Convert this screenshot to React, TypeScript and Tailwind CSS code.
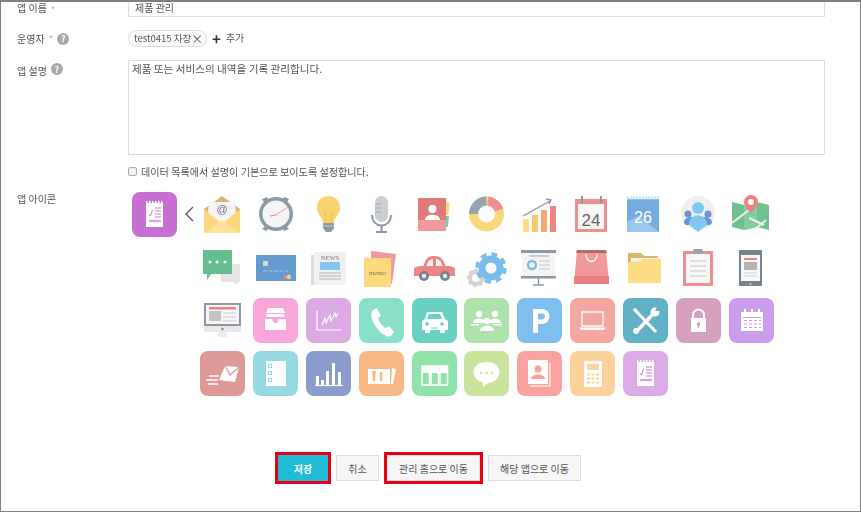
import React from 'react';

const Svg: React.FC<{ children: React.ReactNode }> = ({ children }) => (
  <svg viewBox="0 -4 45 45" width="45" height="45">{children}</svg>
);

const Tile: React.FC<{ color: string; children: React.ReactNode }> = ({ color, children }) => (
  <svg viewBox="0 0 45 45" width="45" height="45">
    <rect width="45" height="45" rx="8" fill={color} />
    {children}
  </svg>
);

const Note = () => (
  <>
    <path d="M14 11h17v24H14z" fill="#fff" />
    <path d="M14 10h17" stroke="#fff" strokeWidth="2" strokeDasharray="1.5 1.5" />
    <path d="M17 22l1.5 2 2-6" stroke="#c77fd6" strokeWidth="1" fill="none" />
    <path d="M23 16h6M23 19h6M23 22h6M23 25h6" stroke="#d9a5e3" strokeWidth="1.6" />
    <path d="M17 29h12" stroke="#d9a5e3" strokeWidth="2.4" />
  </>
);

const icons: React.ReactNode[] = [
  // mail
  <Svg key="mail">
    <path d="M22 0L40 13v10H4V13z" fill="#dcb36c" />
    <path d="M9 6h26l2 20H7z" fill="#f4f4f4" />
    <text x="22" y="17" textAnchor="middle" fontSize="11" fill="#6b7684" fontFamily="'Liberation Sans', sans-serif">@</text>
    <path d="M4 13l18 15 18-15v24H4z" fill="#fbd77c" />
    <path d="M4 37l18-13 18 13z" fill="#fde29b" />
  </Svg>,
  // clock
  <Svg key="clock">
    <path d="M9 3l5-2 2 4-4 3zM36 3l-5-2-2 4 4 3zM9 33l5 2 1-3-3-2zM36 33l-5 2-1-3 3-2z" fill="#8d98a5" />
    <circle cx="23" cy="18" r="17" fill="#8d98a5" />
    <circle cx="23" cy="18" r="13.500" fill="#f4f4f4" />
    <path d="M23 19l-6 1" stroke="#e6848a" strokeWidth="1.200" />
    <path d="M23 19l12-8" stroke="#e6848a" strokeWidth="0.800" />
  </Svg>,
  // bulb
  <Svg key="bulb">
    <path d="M22.500 0a11.500 11.500 0 0 1 11.500 11.500c0 7-5.500 9.500-6 15.500H17c-.5-6-6-8.500-6-15.500A11.500 11.500 0 0 1 22.500 0z" fill="#fbd26e" />
    <path d="M20 27l-1-11M25 27l1-11" stroke="#e9b84f" strokeWidth="0.800" />
    <path d="M17 27h11v5l-3 4h-5l-3-4z" fill="#8d98a5" />
    <path d="M17 30h11" stroke="#c3cad1" strokeWidth="1" />
  </Svg>,
  // mic
  <Svg key="mic">
    <rect x="16" y="0" width="13" height="26" rx="6.500" fill="#c9ced3" />
    <path d="M16 8h6M16 12h6M16 16h6" stroke="#a7aeb6" strokeWidth="1" />
    <path d="M13 19c0 14 19 14 19 0" fill="none" stroke="#8d98a5" strokeWidth="1.800" />
    <path d="M22.500 30v6M17 36h11" stroke="#8d98a5" strokeWidth="2" />
  </Svg>,
  // contact book
  <Svg key="contact">
    <path d="M6 2h28v32H6z" fill="#e07a7a" />
    <path d="M34 6l3.500 1-1 12H34z" fill="#fbd77c" />
    <path d="M34 20h3l-1 11h-2z" fill="#6fd0b8" />
    <path d="M6 24h28v11H6z" fill="#f09a9a" />
    <circle cx="20.500" cy="13" r="4" fill="#fff" />
    <path d="M13 24c0-7 15-7 15 0z" fill="#fff" />
  </Svg>,
  // donut
  <Svg key="donut">
    <circle cx="22.500" cy="18" r="13" fill="none" stroke="#fbd77c" strokeWidth="9" />
    <path d="M9.500 18a13 13 0 0 1 13-13" fill="none" stroke="#97a3af" strokeWidth="9" />
    <path d="M24 5a13 13 0 0 1 11 9" fill="none" stroke="#ee8f8f" strokeWidth="9" />
  </Svg>,
  // growth bars
  <Svg key="growth">
    <path d="M6 20l27-15M29 3l5 1-2 4" fill="none" stroke="#8d98a5" strokeWidth="1.400" />
    <path d="M6 23h6v13H6z" fill="#fcdc85" />
    <path d="M15 19h6v17h-6z" fill="#fbc66c" />
    <path d="M24 14h6v22h-6z" fill="#f8a86b" />
    <path d="M33 10h6v26h-6z" fill="#ee8585" />
  </Svg>,
  // calendar 24
  <Svg key="cal24">
    <rect x="5" y="3" width="32" height="33" fill="#ee8f8f" />
    <rect x="8" y="8" width="26" height="25" fill="#f7f7f7" />
    <path d="M12 0v7M31 0v7" stroke="#8d98a5" strokeWidth="2" />
    <text x="21" y="30" textAnchor="middle" fontSize="17" fill="#666" fontFamily="'Liberation Sans', sans-serif">24</text>
  </Svg>,
  // calendar 26
  <Svg key="cal26">
    <rect x="4" y="3" width="32" height="33" fill="#74ace0" />
    <path d="M4 26l12-6 20 16H4z" fill="#9cc6ec" />
    <path d="M4 2h32" stroke="#c9dff3" strokeWidth="3" strokeDasharray="2 1" />
    <text x="20" y="27" textAnchor="middle" fontSize="16" fill="#fff" fontFamily="'Liberation Sans', sans-serif">26</text>
  </Svg>,
  // users bubble
  <Svg key="users">
    <circle cx="22" cy="17" r="17" fill="#efefef" />
    <circle cx="22" cy="12" r="6" fill="#7fc8ef" />
    <circle cx="12" cy="18" r="3.500" fill="#6596cf" />
    <circle cx="32" cy="18" r="3.500" fill="#6596cf" />
    <path d="M8 27c0-6 7-6 7-6h14s7 0 7 6l-2 2H10z" fill="#6596cf" />
    <path d="M13 29c0-13 18-13 18 0l-4 3-5 4-5-4z" fill="#7fc8ef" />
  </Svg>,
  // map
  <Svg key="map">
    <path d="M3 6l12 3 13-3 12 3v25l-12-3-13 3-12-3z" fill="#6fc18f" />
    <path d="M15 9l13-3v25l-13 3z" fill="#82cd9f" />
    <path d="M3 27l17-13M20 22l15 7M25 34l12-10" stroke="#f0f4ee" strokeWidth="2" />
    <path d="M22 -1a7 7 0 0 1 7 7c0 5-7 11-7 11s-7-6-7-11a7 7 0 0 1 7-7z" fill="#ee8080" />
    <circle cx="22" cy="6" r="3" fill="#fff" />
  </Svg>,
  // chat
  <Svg key="chat">
    <path d="M21 15h19v18h-3v3l-4-3H21z" fill="#e4e4e4" />
    <path d="M3 1h29v24H11l-4 6v-6H3z" fill="#65be90" />
    <circle cx="10" cy="13" r="1.500" fill="#fff" />
    <circle cx="17" cy="13" r="1.500" fill="#fff" />
    <circle cx="25" cy="13" r="1.500" fill="#fff" />
  </Svg>,
  // card
  <Svg key="card">
    <rect x="3" y="6" width="40" height="26" fill="#659ace" />
    <rect x="10" y="12" width="5" height="5" fill="#d5d8cf" />
    <path d="M10 22h25" stroke="#8cb5dc" strokeWidth="1.400" strokeDasharray="4 1.500" />
    <circle cx="33" cy="28" r="2.200" fill="#ee8585" />
    <circle cx="36" cy="28" r="2.200" fill="#fbd26e" />
  </Svg>,
  // news
  <Svg key="news">
    <rect x="5" y="6" width="6" height="30" fill="#dcdcdc" />
    <rect x="8" y="3" width="32" height="33" fill="#f1f1f1" />
    <text x="24" y="11" textAnchor="middle" fontSize="6.500" fill="#777" fontFamily="'Liberation Serif', serif">NEWS</text>
    <rect x="14" y="13" width="20" height="8" fill="#84c4ee" />
    <path d="M13 24h22M13 27h22M13 30h22" stroke="#b2b6bb" strokeWidth="1" />
  </Svg>,
  // memo
  <Svg key="memo">
    <path d="M12 2l25 3-4 30H12z" fill="#f1999f" />
    <path d="M5 9h27v29H5z" fill="#fcd97c" />
    <text x="18.500" y="26" textAnchor="middle" fontSize="7" fill="#8a7a42" fontFamily="'Liberation Serif', serif">memo</text>
  </Svg>,
  // car
  <Svg key="car">
    <path d="M11 18c3-9 5-11 11-11s9 2 12 11z" fill="#ee8585" />
    <path d="M14 18c2-6 4-8 7-8v8zM24 10c3 0 5 2 7 8h-7z" fill="#f4f4f4" />
    <path d="M2 20c0-2 4-3 8-3h25c4 0 8 1 8 3v7H2z" fill="#ee8585" />
    <circle cx="12" cy="27" r="5" fill="#77838f" />
    <circle cx="12" cy="27" r="2.200" fill="#e8e8e8" />
    <circle cx="33" cy="27" r="5" fill="#77838f" />
    <circle cx="33" cy="27" r="2.200" fill="#e8e8e8" />
  </Svg>,
  // gears
  <Svg key="gears">
    <circle cx="12" cy="29" r="6" fill="none" stroke="#d3d3d3" strokeWidth="4" />
    <circle cx="12" cy="29" r="8" fill="none" stroke="#d3d3d3" strokeWidth="2.500" strokeDasharray="3 3" />
    <circle cx="27" cy="19" r="9" fill="none" stroke="#79bdec" strokeWidth="7" />
    <circle cx="27" cy="19" r="14" fill="none" stroke="#79bdec" strokeWidth="3.500" strokeDasharray="6 5" />
  </Svg>,
  // presentation
  <Svg key="presentation">
    <rect x="4" y="1" width="35" height="3" fill="#8d98a5" />
    <rect x="5" y="4" width="33" height="23" fill="#f4f4f4" />
    <path d="M12 7h20" stroke="#b4bac1" strokeWidth="1.400" />
    <circle cx="15" cy="16" r="4" fill="none" stroke="#7fb9e6" strokeWidth="2.400" />
    <path d="M22 12h11M22 16h11M22 20h11" stroke="#c1c6cb" strokeWidth="1" />
    <rect x="4" y="27" width="35" height="2.500" fill="#8d98a5" />
    <path d="M21.500 29v7M16 36h11" stroke="#8d98a5" strokeWidth="1.400" />
  </Svg>,
  // bag
  <Svg key="bag">
    <path d="M7 1h29l3 33H4z" fill="#f09a9a" />
    <path d="M7 1h29l1 3H6z" fill="#b56b6b" />
    <path d="M4 27h35v8H4z" fill="#e98080" />
    <path d="M16 5c0 10 11 10 11 0" fill="none" stroke="#fff" strokeWidth="1.300" />
  </Svg>,
  // folder
  <Svg key="folder">
    <path d="M5 4h13l3 3h14v8H5z" fill="#dcb36c" />
    <path d="M8 9h27v6H8z" fill="#f4f4f4" />
    <path d="M5 13l12-1 3-2 18 0v24H5z" fill="#fcdc85" />
  </Svg>,
  // clipboard
  <Svg key="clipboard">
    <rect x="7" y="2" width="30" height="35" fill="#ee8f8f" />
    <rect x="10" y="5" width="24" height="29" fill="#f8f8f8" />
    <rect x="17" y="0" width="10" height="5" rx="2" fill="#9aa4ae" />
    <path d="M14 12h16M14 17h16M14 22h16M14 27h16" stroke="#c1c6cb" strokeWidth="1" />
  </Svg>,
  // tablet
  <Svg key="tablet">
    <rect x="10" y="1" width="23" height="36" rx="1" fill="#77838f" />
    <rect x="12" y="6" width="19" height="26" fill="#f8f8f8" />
    <rect x="15" y="9" width="13" height="2" fill="#ee8080" />
    <rect x="15" y="13" width="13" height="8" fill="#b5b5b5" />
    <path d="M15 24h13M15 27h13" stroke="#d0d0d0" strokeWidth="1" />
    <circle cx="21.500" cy="35" r="1" fill="#d5d9dd" />
  </Svg>,
  // monitor
  <Svg key="monitor">
    <rect x="4" y="1" width="37" height="23" fill="#8d98a5" />
    <rect x="6" y="3" width="33" height="19" fill="#f7f7f7" />
    <rect x="9" y="5" width="27" height="2.500" fill="#ee8080" />
    <rect x="9" y="9" width="12" height="10" fill="#c4c4c4" />
    <path d="M23 11h13M23 15h13M23 19h13" stroke="#c9ced3" strokeWidth="1" />
    <rect x="4" y="24" width="37" height="6" fill="#e9e9e9" />
    <circle cx="22.500" cy="27" r="1.200" fill="#77838f" />
    <path d="M19 30h7l1 5h-9z" fill="#ececec" />
  </Svg>,
  // inbox
  <Tile key="inbox" color="#f9a6dc">
    <path d="M15 10h15l2 5H13z" fill="#fff" />
    <path d="M14 16h17l1 3H13z" fill="#fff" />
    <path d="M12 21h7l2 4h3l2-4h7v11H12z" fill="#fff" />
  </Tile>,
  // line chart
  <Tile key="linechart" color="#dbaae3">
    <path d="M11 13v19h24" fill="none" stroke="#fff" strokeWidth="1.200" />
    <path d="M16 27l3-7 1 5 4-8 1 6 4-8 1 4 2-4" fill="none" stroke="#fff" strokeWidth="1.100" />
  </Tile>,
  // phone
  <Tile key="phone" color="#8adfc8">
    <path d="M14 12l4-2 4 8-3 2c1 4 4 8 8 10l3-2 5 6-3 4c-4 2-11-3-15-9-5-7-6-14-3-17z" fill="#fff" />
  </Tile>,
  // front car
  <Tile key="frontcar" color="#68d1c1">
    <path d="M15 14h15l3 7 3 2v9h-3v3h-5v-3H18v3h-5v-3h-3v-9l3-2z" fill="#fff" />
    <path d="M17 16h11l2 5H15z" fill="#68d1c1" />
    <circle cx="15" cy="26" r="1.800" fill="#68d1c1" />
    <circle cx="30" cy="26" r="1.800" fill="#68d1c1" />
    <path d="M19 30h7" stroke="#68d1c1" strokeWidth="1" />
  </Tile>,
  // people
  <Tile key="people" color="#aee2ab">
    <g fill="#fff">
      <circle cx="15" cy="16" r="3.200" />
      <path d="M9 25c0-6 12-6 12 0z" />
      <circle cx="31" cy="16" r="3.200" />
      <path d="M25 25c0-6 12-6 12 0z" />
      <circle cx="23" cy="23" r="3.200" />
      <path d="M16 33c0-7 14-7 14 0z" />
      <path d="M7 26h8v1.500H7zM29 26h9v1.500h-9z" />
    </g>
  </Tile>,
  // parking
  <Tile key="parking" color="#7ebff0">
    <path d="M16 11h9c10 0 10 15 0 15h-4v9h-5z" fill="#fff" />
    <path d="M21 15.500h4c4 0 4 6 0 6h-4z" fill="#7ebff0" />
  </Tile>,
  // laptop
  <Tile key="laptop" color="#f5a6a0">
    <rect x="12" y="14" width="21" height="14" fill="none" stroke="#fff" strokeWidth="1.400" />
    <path d="M9 29.500h27l-2 2.500H11z" fill="#fff" />
  </Tile>,
  // tools
  <Tile key="tools" color="#60b0c6">
    <path d="M12 12l21 22" stroke="#fff" strokeWidth="3" />
    <path d="M11 10l3 1 1 3-2 1-3-3z" fill="#fff" />
    <path d="M14 33l17-18" stroke="#fff" strokeWidth="3.500" />
    <circle cx="32" cy="14" r="4.500" fill="#fff" />
    <circle cx="13" cy="33" r="3" fill="#fff" />
    <path d="M32 13l2-4h3v4z" fill="#60b0c6" />
  </Tile>,
  // lock
  <Tile key="lock" color="#d6a1bf">
    <path d="M17 21v-4a5.500 5.500 0 0 1 11 0v4" fill="none" stroke="#fff" strokeWidth="2" />
    <rect x="15" y="20" width="15" height="14" fill="#fff" />
    <circle cx="22.500" cy="26" r="1.800" fill="#d6a1bf" />
    <path d="M22.500 26v4" stroke="#d6a1bf" strokeWidth="1.400" />
  </Tile>,
  // calendar tile
  <Tile key="caltile" color="#cb9eeb">
    <path d="M12 14h22v19H12z" fill="#fff" />
    <path d="M16 11v4M23 11v4M30 11v4" stroke="#fff" strokeWidth="2" />
    <path d="M14 19.500h18" stroke="#cb9eeb" strokeWidth="1" />
    <path d="M15 22.500h17M15 26h17M15 29.500h17" stroke="#cb9eeb" strokeWidth="1.200" strokeDasharray="3 2" />
  </Tile>,
  // fast mail
  <Tile key="fastmail" color="#dd9a97">
    <path d="M19 29l6-14 14 1-4 15z" fill="#fff" />
    <path d="M25 15l5 9 9-8" fill="none" stroke="#dd9a97" strokeWidth="1.200" />
    <path d="M6 29h12M9 25h10M8 33h10" stroke="#fff" strokeWidth="1.600" />
  </Tile>,
  // checklist
  <Tile key="checklist" color="#96d9e3">
    <rect x="13" y="10" width="20" height="25" fill="#fff" />
    <path d="M15 13h4v4h-4zM15 20h4v4h-4zM15 27h4v4h-4z" fill="#96d9e3" />
    <path d="M16 14h2v2h-2zM16 21h2v2h-2zM16 28h2v2h-2z" fill="#fff" />
  </Tile>,
  // bars
  <Tile key="bars" color="#8a9ccb">
    <path d="M9 34.500h28" stroke="#fff" strokeWidth="1.200" />
    <path d="M10 25h3v9h-3zM15 29h3v5h-3zM20 20h3v14h-3zM26 12h3v22h-3zM32 21h3v13h-3z" fill="#fff" />
  </Tile>,
  // tickets
  <Tile key="tickets" color="#f7b885">
    <path d="M9 18h22v15H9z" fill="#fff" />
    <path d="M33 17l4 1-3 15h-2z" fill="#fff" />
    <path d="M15 21v9M22 21v9" stroke="#f7b885" strokeWidth="2.400" />
    <circle cx="15" cy="22" r="2" fill="#f7b885" />
  </Tile>,
  // binders
  <Tile key="binders" color="#8fe3a9">
    <rect x="10" y="15" width="7.500" height="19" fill="none" stroke="#fff" strokeWidth="1.500" />
    <rect x="19" y="15" width="7.500" height="19" fill="none" stroke="#fff" strokeWidth="1.500" />
    <rect x="28" y="15" width="7.500" height="19" fill="none" stroke="#fff" strokeWidth="1.500" />
    <path d="M10 15h7.500v7H10zM19 15h7.500v7H19zM28 15h7.500v7H28z" fill="#fff" />
  </Tile>,
  // speech
  <Tile key="speech" color="#cbe49c">
    <path d="M22.500 11c9 0 13 5 13 10.500S30 32 24 32l-5 4v-4.500c-5-1-9.500-5-9.500-10C9.500 16 13.500 11 22.500 11z" fill="#fff" />
    <circle cx="17" cy="22" r="1.200" fill="#cbe49c" />
    <circle cx="22.500" cy="22" r="1.200" fill="#cbe49c" />
    <circle cx="28" cy="22" r="1.200" fill="#cbe49c" />
  </Tile>,
  // address book
  <Tile key="address" color="#fba2a0">
    <path d="M11 9h20v24H11z" fill="#fff" />
    <path d="M33 12v23H13" fill="none" stroke="#fff" strokeWidth="1.200" />
    <circle cx="21" cy="18" r="3.500" fill="#fba2a0" />
    <path d="M14 28c0-6 14-6 14 0z" fill="#fba2a0" />
  </Tile>,
  // calculator
  <Tile key="calculator" color="#fdd19a">
    <rect x="14" y="10" width="18" height="26" fill="#fff" />
    <rect x="17" y="13" width="12" height="6" fill="#fdd19a" />
    <path d="M17 23.500h12M17 27.500h12M17 31.500h12" stroke="#fdd19a" strokeWidth="2.200" strokeDasharray="3 1.500" />
  </Tile>,
  // note
  <Tile key="notetile" color="#dcaae6">
    <Note />
  </Tile>,
];

const Help = () => (
  <span className="inline-flex h-[12px] w-[12px] items-center justify-center rounded-full bg-[#a8a8a8] text-[9px] font-bold leading-none text-white">?</span>
);

const Star = () => <span className="text-[10px] leading-none text-[#f5a27a]">*</span>;

const App: React.FC = () => {
  const font = { fontFamily: "'Noto Sans CJK KR', 'Liberation Sans', sans-serif" };
  return (
    <div style={font} className="h-[512px] w-[861px] overflow-hidden border border-t-2 border-[#808080] bg-white text-[10px] text-[#555]">
      <div className="blur-[0.3px]">
        <div className="-mt-[16px] flex pl-[16px] pr-[35px]">
          <div className="flex w-[111px] items-end gap-1 pb-[2px]">
            앱 이름 <Star />
          </div>
          <div className="flex h-[31px] flex-1 items-end border border-[#ddd] px-[6px] pb-[1px] text-[#555]">제품 관리</div>
        </div>

        <div className="mt-[13px] flex items-center pl-[16px] pr-[35px]">
          <div className="flex w-[111px] items-center gap-1">
            운영자 <Star /> <Help />
          </div>
          <div className="flex h-[17px] w-[79px] items-center justify-between whitespace-nowrap rounded-full border border-[#ddd] bg-[#fbfbfb] pl-[5px] pr-[3px] text-[9.500px] text-[#555]">
            test0415 차장 <span className="text-[12px] leading-none">×</span>
          </div>
          <span className="ml-[5px] text-[15px] font-bold leading-none text-[#333]">+</span>
          <span className="-mt-[2px] ml-[5px] text-[10px] text-[#555]">추가</span>
        </div>

        <div className="mt-[13px] flex pl-[16px] pr-[35px]">
          <div className="flex w-[111px] items-start gap-1 pt-[3px]">
            앱 설명 <Help />
          </div>
          <div className="h-[95px] flex-1 border border-[#ddd] px-[3px] pt-[1px] text-[10.600px] leading-[14px] text-[#555]">
            제품 또는 서비스의 내역을 기록 관리합니다.
          </div>
        </div>

        <div className="mt-[9px] flex items-center gap-[4px] pl-[127px] text-[10.100px] text-[#555]">
          <span className="h-[9px] w-[9px] rounded-[2px] border border-[#aaa] bg-[#f2f2f2]" />
          데이터 목록에서 설명이 기본으로 보이도록 설정합니다.
        </div>

        <div className="mt-[13px] flex pl-[16px]">
          <div className="w-[115px] leading-[13px]">앱 아이콘</div>
          <div className="flex h-[45px] w-[68px] items-start gap-[6px]">
            <svg viewBox="0 0 45 45" width="45" height="45">
              <rect width="45" height="45" rx="8" fill="#c86fd4" />
              <Note />
            </svg>
            <svg viewBox="0 0 12 18" width="12" height="18" className="mt-[13px] shrink-0">
              <path d="M10 2L3 9l7 7" fill="none" stroke="#555" strokeWidth="1.300" />
            </svg>
          </div>
          <div className="grid grid-cols-[repeat(11,45px)] gap-x-[7.900px] gap-y-[8px]">
            {icons.slice(0, 11)}
          </div>
        </div>

        <div className="mt-[8px] grid grid-cols-[repeat(11,45px)] gap-x-[7.900px] gap-y-[8px] pl-[199px]">
          {icons.slice(11)}
        </div>
      </div>

      <div className="mt-[59px] flex justify-center gap-[8px] pr-[2px] text-[10px] [word-spacing:-1px]">
        <button className="h-[26px] w-[50px] bg-[#20bcd5] font-bold text-white outline-[3px] outline-[#e60012]">저장</button>
        <button className="h-[26px] w-[43px] border border-[#ddd] bg-[#f6f6f6] text-[#555]">취소</button>
        <button className="h-[26px] w-[93px] border border-[#ddd] bg-[#f6f6f6] text-[#555] outline-[3px] outline-[#e60012]">관리 홈으로 이동</button>
        <button className="h-[26px] w-[93px] border border-[#ddd] bg-[#f6f6f6] text-[#555]">해당 앱으로 이동</button>
      </div>
    </div>
  );
};

export default App;
